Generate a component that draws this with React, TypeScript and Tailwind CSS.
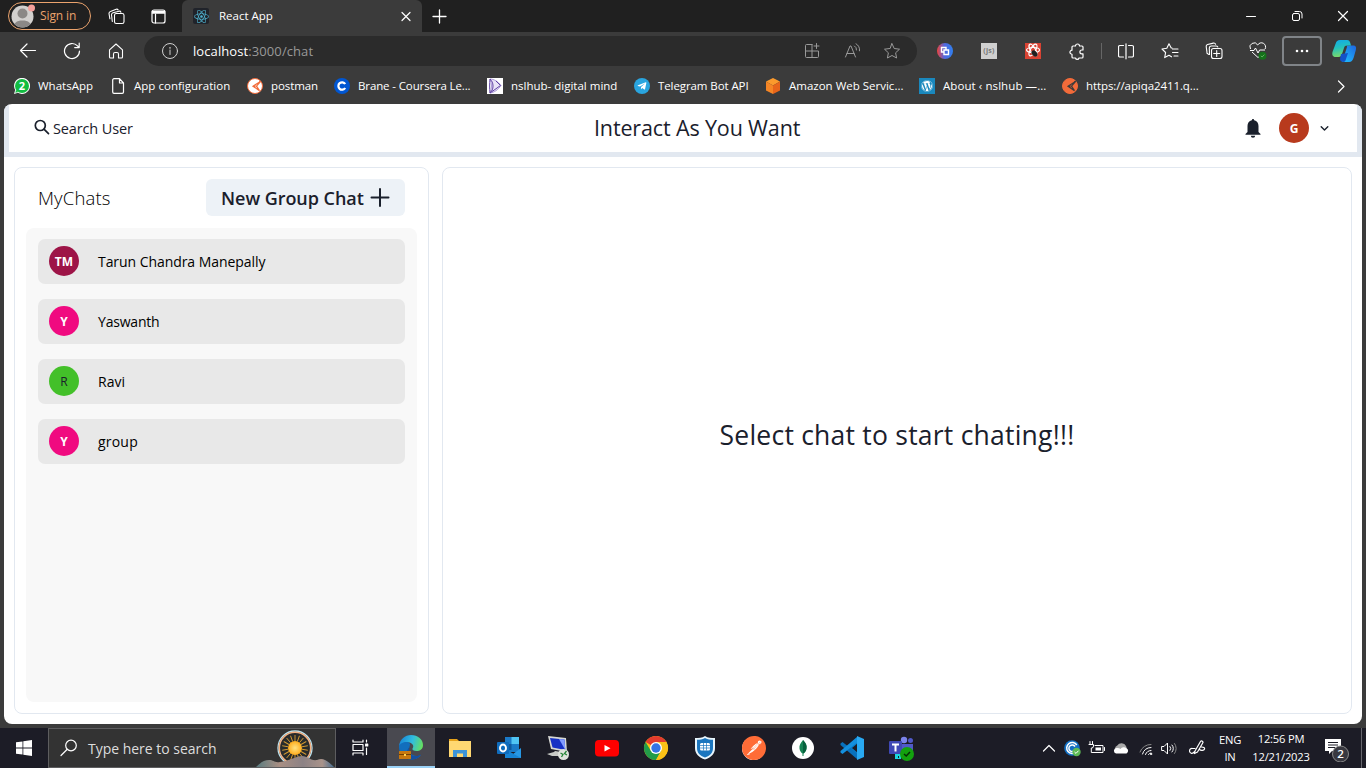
import React from 'react';
import { FaReact, FaWordpress, FaTelegramPlane } from 'react-icons/fa';
import { SiPostman } from 'react-icons/si';

type IconProps = {
  s?: number;
  h?: number;
  vb?: string;
  sw?: number;
  className?: string;
  children: React.ReactNode;
};

function Line({ s = 16, h, vb = '0 0 16 16', sw = 1, className = '', children }: IconProps) {
  return (
    <svg
      width={s}
      height={h ?? s}
      viewBox={vb}
      fill="none"
      stroke="currentColor"
      strokeWidth={sw}
      strokeLinecap="round"
      strokeLinejoin="round"
      className={'shrink-0 ' + className}
    >
      {children}
    </svg>
  );
}

/* ---------- Browser chrome ---------- */

function ProfileIcon() {
  return (
    <svg width="25" height="24" viewBox="0 0 25 24" className="shrink-0">
      <defs>
        <clipPath id="face">
          <circle cx="11.5" cy="12.5" r="11" />
        </clipPath>
      </defs>
      <circle cx="11.5" cy="12.5" r="11" fill="#d2d0ce" />
      <g clipPath="url(#face)" fill="#8b8886">
        <circle cx="11.5" cy="9.5" r="5" />
        <path d="M2.500 24c0-5 3-7.500 9-7.500s9 2.500 9 7.500z" />
      </g>
      <circle cx="20.500" cy="4" r="3.500" fill="#f5a09b" />
    </svg>
  );
}

function TabBar() {
  return (
    <div className="flex h-8 shrink-0 items-center bg-[#202020]">
      <div className="ml-2 flex h-7 w-[83px] items-center rounded-full border border-[#eba36d] pl-[2px]">
        <ProfileIcon />
        <span className="ml-1 text-[12px] leading-none tracking-[-0.1px] whitespace-nowrap text-[#eba36d]">Sign in</span>
      </div>
      <Line className="ml-[17px] text-white" s={17} h={17} vb="0 0 17 17" sw={1.100}>
        <rect x="6.500" y="5.500" width="9.500" height="10" rx="1.800" />
        <path d="M4.300 13.500 3.500 6.800a2.200 2.200 0 0 1 1.500-2L11 3.200a1.600 1.600 0 0 1 1.900 1" />
        <path d="M1.900 10.800 1 5.500a2 2 0 0 1 1.500-2L8.200 1.200a1.600 1.600 0 0 1 1.900.7" />
      </Line>
      <Line className="ml-[26px] text-white" s={15} h={15} vb="0 0 15 15" sw={1.200}>
        <rect x="1" y="1" width="13" height="13" rx="2" />
        <path d="M1.500 2.500h12M1.500 4h12" strokeWidth="1.500" />
        <path d="M4.500 5v9" />
      </Line>
      <div className="ml-4 flex h-8 w-[240px] items-center rounded-t-md bg-[#3b3b3b] pl-[11px]">
        <div className="flex size-4 items-center justify-center rounded-[2px] bg-[#20232a]">
          <FaReact size={15} color="#4fb3cf" />
        </div>
        <span className="ml-[10px] w-[178px] text-[11.500px] leading-none tracking-[0px] whitespace-nowrap text-white">React App</span>
        <Line className="ml-[3px] text-white" s={12} vb="0 0 12 12" sw={1.200}>
          <path d="m2 2.500 8 8M10 2.500l-8 8" />
        </Line>
      </div>
      <Line className="ml-[9px] text-white" s={17} vb="0 0 17 17" sw={1.300}>
        <path d="M8.500 2v13M2 8.500h13" />
      </Line>
      <div className="ml-auto flex items-center pr-[17px] text-white">
        <Line s={12} vb="0 0 12 12"><path d="M1.500 6.500h9" /></Line>
        <Line className="ml-[34px]" s={12} vb="0 0 12 12">
          <rect x="1.500" y="3.500" width="7" height="7" rx="1.500" />
          <path d="M4 1.500h4.500a2.500 2.500 0 0 1 2.500 2.500v4" />
        </Line>
        <Line className="ml-[34px]" s={12} vb="0 0 12 12" sw={1.200}><path d="m1.500 1.500 9 9M10.500 1.500l-9 9" /></Line>
      </div>
    </div>
  );
}

function Toolbar() {
  return (
    <div className="flex h-[38px] shrink-0 items-center text-white">
      <Line className="ml-[19px]" s={18} vb="0 0 18 18" sw={1.200}><path d="M16.500 8.500H1.500M8 2 1.500 8.500 8 15" /></Line>
      <Line className="ml-[26px]" s={18} vb="0 0 18 18" sw={1.200}>
        <path d="M16.500 9a7.500 7.500 0 1 1-2-5.100L16 5.500M16.200 1v4.600h-4.500" />
      </Line>
      <Line className="ml-[27px]" s={16} h={18} vb="0 0 16 18" sw={1.100}>
        <path d="M1.500 7.800 8 2l6.500 5.800v7.200a1 1 0 0 1-1 1H10.500v-4a1.500 1.500 0 0 0-1.500-1.500H7A1.500 1.500 0 0 0 5.500 12v4h-3a1 1 0 0 1-1-1z" />
      </Line>
      <div className="ml-5 flex h-[30px] w-[773px] items-center rounded-full bg-[#2b2b2b] pl-[17px]">
        <Line className="text-[#d0d0d0]" s={18} vb="0 0 18 18">
          <circle cx="9" cy="9" r="7.500" />
          <path d="M9 8v4.500" />
          <path d="M9 5.700v.2" strokeWidth="1.500" />
        </Line>
        <span className="ml-[14px] text-[13px] leading-none tracking-[0.090px] whitespace-nowrap text-white">
          localhost<span className="text-[#999]">:3000/chat</span>
        </span>
        <div className="ml-auto flex items-center pr-4 text-[#9a9a9a]">
          <Line s={16}>
            <path d="M8 1.500H2.500a1 1 0 0 0-1 1V13.500a1 1 0 0 0 1 1H13.500a1 1 0 0 0 1-1V8H1.500M8 1.500v13M12.500.500v5M10 3h5" />
          </Line>
          <Line className="ml-6" s={17} vb="0 0 17 17">
            <path d="M1.500 14 6 3h1l4.500 11M3 10.500h7M10.500 3a4 4 0 0 1 2 4M12 .800a7 7 0 0 1 3.500 7" />
          </Line>
          <Line className="ml-[22px]" s={18} vb="0 0 18 18">
            <path d="m9 1.700 2.200 4.800 5.300.7-3.900 3.600 1 5.200L9 13.500 4.400 16l1-5.200L1.500 7.200l5.300-.7z" />
          </Line>
        </div>
      </div>

      <svg className="ml-5 shrink-0" width="16" height="16" viewBox="0 0 16 16">
        <defs>
          <linearGradient id="ext" x1="0" x2="1" y1=".5" y2=".5">
            <stop offset="0" stopColor="#f2433a" /><stop offset=".45" stopColor="#5567dc" /><stop offset="1" stopColor="#2f80f0" />
          </linearGradient>
        </defs>
        <circle cx="8" cy="8" r="8" fill="url(#ext)" />
        <path d="M9 6.500V4.500H4.500V9h2M7 7v4.500h4.500V7H7z" fill="none" stroke="#fff" strokeWidth="1.400" />
      </svg>
      <div className="ml-7 flex size-4 items-center justify-center bg-[#cfcfcf] text-[7px] font-bold tracking-[0.300px] text-[#777]">(js)</div>
      <svg className="ml-7 shrink-0" width="16" height="16" viewBox="0 0 16 16">
        <rect width="16" height="16" fill="#d94333" />
        <g fill="none" stroke="#fff" strokeWidth="1.200"><ellipse cx="8" cy="7" rx="6.500" ry="2.500" /><ellipse cx="8" cy="7" rx="6.500" ry="2.500" transform="rotate(60 8 7)" /><ellipse cx="8" cy="7" rx="6.500" ry="2.500" transform="rotate(120 8 7)" /></g>
        <ellipse cx="9.500" cy="10.500" rx="2.500" ry="3.500" fill="#202020" transform="rotate(-40 9.500 10.500)" />
      </svg>
      <Line className="ml-[27px]" s={17} vb="0 0 17 17" sw={1.200}>
        <path d="M5 3h2.500a2 2 0 1 1 4 0H14a1 1 0 0 1 1 1v3h-1.200a1.900 1.900 0 1 0 0 3.800H15V14a1 1 0 0 1-1 1h-3a1.800 1.800 0 0 1-3.500 0H5a1 1 0 0 1-1-1v-2.700a2 2 0 1 1 0-4.100V4a1 1 0 0 1 1-1z" />
      </Line>
      <div className="mr-4 ml-[16px] h-4 w-px bg-[#666]" />
      <Line s={16} h={17} vb="0 0 16 17" sw={1.200}>
        <path d="M5.500 2.500H2a1.500 1.500 0 0 0-1.500 1.500v8.500A1.500 1.500 0 0 0 2 14h3.500M10.500 2.500H14A1.500 1.500 0 0 1 15.500 4v8.500A1.500 1.500 0 0 1 14 14h-3.500M8 .800v15" />
      </Line>
      <Line className="ml-[27px]" s={18} vb="0 0 18 18" sw={1.100}>
        <path d="M11.500 7h5.500M11.500 10.500h5.500M13 14h4M11 6h-.8L8 1.700 5.800 6.200 1 7l3.600 3.500-.9 5.100L8 13.300l2.500 1.500" />
      </Line>
      <Line className="ml-[26px]" s={18} vb="0 0 18 18" sw={1.100}>
        <rect x="6.500" y="6.500" width="10.500" height="10" rx="2" />
        <path d="M11.700 8.500v6M8.700 11.500h6M4.500 12.500l-1.400-.4a2 2 0 0 1-1.200-2.400L1.200 4.700a2 2 0 0 1 1.400-2.200l5.800-1.400a2 2 0 0 1 2.200 1.200M4.500 12.300 4.300 6a2 2 0 0 1 1.800-2h5a2 2 0 0 1 1.700 1" />
      </Line>
      <svg className="ml-[26px] shrink-0" width="18" height="18" viewBox="0 0 18 18" fill="none" stroke="#fff" strokeLinejoin="round">
        <path d="M1.500 7a4 4 0 0 1 7.200-4 4 4 0 0 1 7.400 4M3 10l6 5.500 1-.8M1 8.500h4L6.500 6 9 11l1.600-3H16" />
        <circle cx="13.500" cy="13.700" r="4" fill="#15711b" stroke="none" />
        <path d="m11.800 13.800 1.300 1.200 2.300-2.400" stroke="#5fae5f" />
      </svg>
      <div className="ml-[15px] flex h-[30px] w-10 shrink-0 items-center justify-center rounded-[4px] border-2 border-[#808488]">
        <svg width="14" height="4" viewBox="0 0 14 4" fill="#fff"><circle cx="2" cy="2" r="1.300" /><circle cx="7" cy="2" r="1.300" /><circle cx="12" cy="2" r="1.300" /></svg>
      </div>
      <svg className="ml-[9px] shrink-0" width="26" height="24" viewBox="0 0 26 24">
        <defs>
          <linearGradient id="cp1" x1="0" x2=".2" y1="0" y2="1"><stop offset="0" stopColor="#10a9ea" /><stop offset=".5" stopColor="#24c1bd" /><stop offset="1" stopColor="#78d96d" /></linearGradient>
          <linearGradient id="cp2" x1="0" x2="1" y1="1" y2="0"><stop offset="0" stopColor="#20c4ff" /><stop offset="1" stopColor="#1d64de" /></linearGradient>
        </defs>
        <path d="M13 6.500h8.500c4 0 4 2 3.200 5l-2 7c-1 3-2.500 4.500-4.500 4.500h-7l4.500-14c.8-2 .500-2.500-2.700-2.500z" fill="url(#cp2)" />
        <path d="M9 1h7c2 0 2.700 1 3.300 3l.7 2.500h-4c-2 0-2.600 1-3 2.500l-2 6c-.6 2-1.500 3-3.500 3H4.500C1.500 18 .9 15.500 1.500 13L4.500 5C5.500 2 6.500 1 9 1z" fill="url(#cp1)" />
        <path d="m10 15-1 5c0 2 1.500 3 3.500 3 1.500 0 2-1 2.500-3l2-6z" fill="#1353c8" />
      </svg>
    </div>
  );
}

function Bookmark({ icon, label, className }: { icon: React.ReactNode; label: string; className: string }) {
  return (
    <div className={'flex shrink-0 items-center ' + className}>
      <div className="flex size-4 shrink-0 items-center justify-center">{icon}</div>
      <span className="ml-2 text-[11.500px] leading-none whitespace-nowrap text-white">{label}</span>
    </div>
  );
}

function PostmanMark({ bg, fg }: { bg: string; fg: string }) {
  return (
    <svg width="16" height="16" viewBox="0 0 16 16">
      <circle cx="8" cy="8" r="7.500" fill={bg} stroke="#f26b3a" />
      <path d="M13.500 3.500 6 8.200l6.500 4.500M13.500 3.500 9.500 8.200l3 4.500" fill="none" stroke={fg} strokeWidth="1.200" />
      <path d="m6 8.200 2.500-1.500v3z" fill={fg} />
    </svg>
  );
}

function Bookmarks() {
  return (
    <div className="flex h-[34px] shrink-0 items-center pb-[2px] pl-[14px] text-white">
      <Bookmark
        className="w-[96px] tracking-[0px]"
        label="WhatsApp"
        icon={
          <svg width="16" height="16" viewBox="0 0 16 16">
            <path d="M0 16 1.200 12A8 8 0 1 1 4 14.800z" fill="#fff" />
            <circle cx="8" cy="8" r="7" fill="#12bd42" /><path d="m1.300 14.700.8-3 2.200 2.200z" fill="#12bd42" />
            <text x="8" y="12" textAnchor="middle" fontSize="11" fontWeight="700" fill="#fff">2</text>
          </svg>
        }
      />
      <Bookmark
        className="w-[137px] tracking-[0.020px]"
        label="App configuration"
        icon={<Line sw={1.200}><path d="M4 .700h5.500l4 4.300v9a1.300 1.300 0 0 1-1.300 1.300H4A1.300 1.300 0 0 1 2.700 14V2A1.300 1.300 0 0 1 4 .700zM9.500 1v4h4" /></Line>}
      />
      <Bookmark className="w-[87px] tracking-[-0.100px]" label="postman" icon={<PostmanMark bg="#fff" fg="#f26b3a" />} />
      <Bookmark
        className="w-[153px] tracking-[-0.120px]"
        label="Brane - Coursera Le..."
        icon={
          <svg width="16" height="16" viewBox="0 0 16 16">
            <circle cx="8" cy="8" r="8" fill="#0056d2" />
            <path d="M11.200 6a3.700 3.700 0 1 0 0 4" fill="none" stroke="#fff" strokeWidth="2.200" />
          </svg>
        }
      />
      <Bookmark
        className="w-[147px] tracking-[0px]"
        label="nslhub- digital mind"
        icon={
          <svg width="16" height="16" viewBox="0 0 16 16">
            <rect width="16" height="16" fill="#fff" />
            <path d="M3 1c4 0 8 2.500 11 6.500C11 12 7 14.500 3 15 5 10 5 6 3 1z" fill="#eae4f7" stroke="#9a84cf" strokeWidth=".8" />
            <path d="M3 1c-.5 5-.5 9 0 14 2-2 3-4 3-7S5 3 3 1zM3 15l10.500-7.500L9 3" fill="none" stroke="#5f42a3" strokeWidth="1" />
          </svg>
        }
      />
      <Bookmark
        className="w-[131px] tracking-[-0.090px]"
        label="Telegram Bot API"
        icon={<div className="flex size-4 items-center justify-center rounded-full bg-[#2aa5df]"><FaTelegramPlane size={10} /></div>}
      />
      <Bookmark
        className="w-[154px] tracking-[0px]"
        label="Amazon Web Servic..."
        icon={
          <svg width="16" height="16" viewBox="0 0 16 16">
            <path d="m8 0 7 3.500-7 4-7-4z" fill="#fb9a2c" /><path d="m1 3.500 7 4V16l-7-3.500z" fill="#f58525" /><path d="m15 3.500-7 4V16l7-3.500z" fill="#e8651a" />
          </svg>
        }
      />
      <Bookmark
        className="w-[143px] tracking-[0.080px]"
        label="About ‹ nslhub —..."
        icon={<div className="flex size-4 items-center justify-center bg-[#1a88bd]"><FaWordpress size={12} /></div>}
      />
      <Bookmark className="w-[150px] tracking-[-0.080px]" label="https://apiqa2411.q..." icon={<PostmanMark bg="#f26b3a" fg="#3b3b3b" />} />
      <Line className="mr-[18px] ml-auto text-white" s={14} vb="0 0 14 14" sw={1.200}><path d="m4.500 2 5.500 5.500L4.500 13" /></Line>
    </div>
  );
}

/* ---------- Chat application ---------- */

const chats = [
  { initials: 'TM', name: 'Tarun Chandra Manepally', color: 'bg-[#9d1447] font-bold text-white', tracking: 'tracking-[-0.060px]' },
  { initials: 'Y', name: 'Yaswanth', color: 'bg-[#f00a80] font-bold text-white', tracking: 'tracking-[-0.200px]' },
  { initials: 'R', name: 'Ravi', color: 'bg-[#43c029] font-normal text-[#1a202c]', tracking: 'tracking-[0px]' },
  { initials: 'Y', name: 'group', color: 'bg-[#f00a80] font-bold text-white', tracking: 'tracking-[0.200px]' },
];

function Avatar({ initials, color }: { initials: string; color: string }) {
  return (
    <div className={'flex size-[30px] shrink-0 items-center justify-center rounded-full pt-px text-[12px] leading-none ' + color}>
      {initials}
    </div>
  );
}

function ChatApp() {
  return (
    <div className="mx-1 flex h-[620px] shrink-0 flex-col overflow-hidden rounded-lg bg-white text-[#1a202c]">
      <header className="flex h-[53px] shrink-0 items-center border-x-[5px] border-b-[5px] border-[#e2e8f0] pr-[27px] pl-[25px]">
        <div className="flex w-[560px] items-center">
          <Line className="mb-[3px]" s={16} vb="0 0 16 16" sw={1.700}>
            <circle cx="6.300" cy="6.500" r="5" /><path d="m10.200 10.400 4.300 4.300" />
          </Line>
          <span className="mt-[2px] ml-[3px] text-[14.500px] leading-none font-medium tracking-[-0.130px] whitespace-nowrap">Search User</span>
        </div>
        <h1 className="text-[21.500px] leading-none font-normal tracking-[-0.140px] whitespace-nowrap">Interact As You Want</h1>
        <div className="flex flex-1 items-center justify-end">
          <svg width="16" height="19" viewBox="0 0 16 19" fill="#1a202c">
            <path d="M8 0a1.200 1.200 0 0 0-1.200 1.200C4 1.800 2.500 4 2.500 7v6L.500 15v.800h15V15l-2-2V7c0-3-1.500-5.200-4.300-5.800A1.200 1.200 0 0 0 8 0zM5.800 16.800a2.200 2 0 0 0 4.400 0z" />
          </svg>
          <div className="mr-[10px] ml-[18px]"><Avatar initials="G" color="bg-[#b83a1d] font-bold text-white" /></div>
          <Line s={11} vb="0 0 11 11" sw={1.400}><path d="m2.200 3.700 3.300 3.300 3.300-3.300" /></Line>
        </div>
      </header>
      <main className="flex min-h-0 flex-1 gap-[13px] p-[10px]">
        <section className="flex w-[415px] flex-col rounded-[8px] border border-[#e2e8f0] px-[11px] pt-[11px] pb-[11px]">
          <div className="flex h-[37px] shrink-0 items-center justify-between px-3">
            <h2 className="mt-[2px] text-[18.500px] leading-none font-light tracking-[0.150px] text-black">MyChats</h2>
            <button className="flex h-[37px] w-[199px] items-center rounded-[6px] bg-[#edf2f7] pl-[15px]">
              <span className="text-[18px] leading-none font-semibold tracking-[-0.040px] whitespace-nowrap">New Group Chat</span>
              <Line className="ml-[6px]" s={20} vb="0 0 20 20" sw={2}><path d="M10 1v17M1.500 9.500h17" /></Line>
            </button>
          </div>
          <div className="mt-3 flex flex-1 flex-col gap-[15px] rounded-[8px] bg-[#f8f8f8] px-3 pt-[11px]">
            {chats.map((chat) => (
              <div key={chat.name} className="flex h-[45px] items-center rounded-[7px] bg-[#e8e8e8] pl-[11px] text-black">
                <div className="pb-px"><Avatar initials={chat.initials} color={chat.color} /></div>
                <span className={'ml-[19px] text-[14px] leading-none ' + chat.tracking}>{chat.name}</span>
              </div>
            ))}
          </div>
        </section>
        <section className="flex flex-1 items-center justify-center rounded-[8px] border border-[#e2e8f0] pb-[10px]">
          <p className="text-[26.500px] leading-none font-normal tracking-[0.230px] whitespace-nowrap">Select chat to start chating!!!</p>
        </section>
      </main>
    </div>
  );
}

/* ---------- Windows taskbar ---------- */

function SearchArt() {
  const rays = Array.from({ length: 18 }, (_, i) => i * 20);
  return (
    <svg width="80" height="38" viewBox="0 0 80 38" className="absolute right-0 bottom-0">
      <defs>
        <linearGradient id="hill" x1="0" x2="1"><stop offset="0" stopColor="#597c80" /><stop offset=".3" stopColor="#a98f83" /><stop offset=".6" stopColor="#8c8285" /><stop offset=".85" stopColor="#a9938a" /><stop offset="1" stopColor="#476e91" /></linearGradient>
        <radialGradient id="sun"><stop offset="0" stopColor="#ffe282" /><stop offset="1" stopColor="#ffad1c" /></radialGradient>
      </defs>
      <circle cx="40" cy="19" r="17" fill="#292b2b" stroke="#b9e3f0" strokeWidth="1.300" />
      <circle cx="40" cy="19" r="15.700" fill="none" stroke="#f3b183" strokeWidth="1.500" />
      {rays.map((r) => <path key={r} d="M40 12V6" stroke="#d59b32" strokeWidth=".9" transform={`rotate(${r} 40 19)`} />)}
      <circle cx="40" cy="19" r="7" fill="url(#sun)" />
      <path d="M1 38c4-4 8-7 13-7 5 0 5 3 11 2 8-1 17-6 22-6 6 0 8 5 15 4 5-2 9-1 17 7z" fill="url(#hill)" />
    </svg>
  );
}

function TaskIcon({ children }: { children: React.ReactNode }) {
  return (
    <div className="flex h-10 w-[49px] shrink-0 items-center justify-center">
      <svg width="26" height="26" viewBox="0 0 26 26">{children}</svg>
    </div>
  );
}

function Taskbar() {
  return (
    <footer className="mt-1 flex h-10 shrink-0 items-center bg-[#1c1c26] text-white">
      <div className="flex w-12 shrink-0 justify-center">
        <svg width="16" height="16" viewBox="0 0 16 16" fill="#fff"><path d="m0 2.300 6.500-.9v6.200H0zM7.300 1.200 16 0v7.600H7.300zM0 8.400h6.500v6.200L0 13.700zM7.300 8.400H16V16l-8.700-1.200z" /></svg>
      </div>
      <div className="relative flex h-10 w-[288px] shrink-0 items-center border border-[#5d5d5f] bg-[#333]">
        <Line className="ml-[11px]" s={18} vb="0 0 18 18" sw={1.200}><circle cx="11" cy="6.500" r="5.300" /><path d="M7 10.500 1 16.500" /></Line>
        <span className="mt-[2px] ml-[10px] text-[14px] leading-none tracking-[-0.020px] whitespace-nowrap text-[#ddd]">Type here to search</span>
        <SearchArt />
      </div>
      <div className="flex h-10 w-[51px] shrink-0 items-center justify-center pr-1">
        <Line s={18} vb="0 0 18 18" sw={1.200}>
          <path d="M2 1v2h10V1M2 5.500h10v6H2zM2 16v-2h10v2M15.500 1v2M15.500 9v6.500" />
          <rect x="14.700" y="5" width="2" height="2" fill="#fff" />
        </Line>
      </div>
      <div className="flex h-10 w-12 shrink-0 items-center justify-center border-b-2 border-[#9ad2f7] bg-[#494950]">
        <svg width="26" height="26" viewBox="0 0 26 26">
          <defs>
            <linearGradient id="edge" x1="0" x2="1" y1=".3" y2=".5"><stop offset="0" stopColor="#1684d8" /><stop offset=".55" stopColor="#31bddf" /><stop offset="1" stopColor="#65df62" /></linearGradient>
          </defs>
          <path d="M1 13c0-5 5-7 9-5 3 1.500 2 3 1.500 5-2 5 2.500 9 7 9 2 0 3.500-.500 4.500-1-2 3-6 4.500-10 4.500C6 25.500 1 20 1 13z" fill="#126ebd" />
          <path d="M1 12C2 5 7 1 13 1c7 0 12 4.500 12 10 0 4-3 6-6.500 6-3 0-4.500-1-4-2.500 1.500-1.500 1-5-3-6C7 7 2 9 1 12z" fill="url(#edge)" />
          <path d="M11.500 13c-2 5 1 8.500 5.500 9 2.500.2 4.500-.500 6-1.500-2 3.500-6 5.500-10 5-5-2-5.500-9-1.500-12.500z" fill="#1650a0" />
          <rect x="1" y="17" width="12" height="8" rx=".5" fill="#c8780f" /><path d="M1 20.500h12" stroke="#744000" /><rect x="6" y="20" width="2" height="2" fill="#ffd34c" />
        </svg>
      </div>
      <TaskIcon>
        <path d="M2 4h8l2 2v3H2z" fill="#e6a21a" /><path d="M2 6h22v16H2z" fill="#ffd872" /><path d="M6 22v-7h14v7h-4v-3.500h-6V22z" fill="#3d94d9" />
      </TaskIcon>
      <TaskIcon>
        <path d="M9 2h14v15H9z" fill="#1a7ac8" /><path d="M15.500 2H23v7h-7.500z" fill="#50c5f4" /><path d="M9 9h6.500v6H9z" fill="#0f599e" /><path d="M9 15l8 4 8-6v10H9z" fill="#2798e5" /><path d="m9 14 16 9H9z" fill="#1683d4" /><rect x="1" y="7" width="12" height="12" rx="1" fill="#0f6cbd" /><ellipse cx="7" cy="13" rx="3" ry="3.500" fill="none" stroke="#fff" strokeWidth="1.900" />
      </TaskIcon>
      <TaskIcon>
        <path d="m3 1 18 2 1 14-16-3z" fill="#d7d8d4" /><path d="m5 3 14.500 1.500.8 10.500L7.500 12.500z" fill="#1731c4" /><path d="m14 4 5.500.500.8 10.500z" fill="#829cff" /><path d="m10 16 6 1-1 4H7l-5-2 7-2z" fill="#c9cbc7" /><circle cx="18.500" cy="19.500" r="5.500" fill="#dfe3dc" /><path d="m15.500 18 2.500 1.500-1.500 2.500M21.500 16l-2 2.500 2.500 1.500" fill="none" stroke="#278538" strokeWidth="1.300" />
      </TaskIcon>
      <TaskIcon><rect x="1" y="5" width="24" height="16.500" rx="4" fill="#f00" /><path d="m10.500 10 6 3.300-6 3.300z" fill="#fff" /></TaskIcon>
      <TaskIcon>
        <circle cx="13" cy="13" r="12" fill="#fbc116" /><path d="M13 13 2.600 7A12 12 0 0 1 23.400 7z" fill="#e33b2e" /><path d="M2.600 7A12 12 0 0 0 13 25l5-9-5 1-5-1z" fill="#229c49" /><path d="M13 7h10.400A12 12 0 0 1 13 25l5.200-9z" fill="#fbc116" /><circle cx="13" cy="13" r="6" fill="#fff" /><circle cx="13" cy="13" r="4.700" fill="#3474e6" />
      </TaskIcon>
      <TaskIcon>
        <path d="M13 1c3 2 6 2 10 2v10c0 6-4 9.500-10 11.500C7 22.500 3 19 3 13V3c4 0 7 0 10-2z" fill="#e9f6fd" /><path d="M13 3c3 1.500 5 1.700 8 1.800V13c0 5-3 7.500-8 9.500C8 20.500 5 18 5 13V4.800c3-.1 5-.3 8-1.800z" fill="#1b76bf" />
        <rect x="8" y="8" width="10" height="7.500" rx="1.500" fill="#fff" /><path d="M8 10.500h10M8 13h10M11.500 8v7.500M14.500 8v7.500" stroke="#1b76bf" strokeWidth=".7" />
      </TaskIcon>
      <div className="flex h-10 w-[49px] shrink-0 items-center justify-center"><div className="flex size-[23px] items-center justify-center rounded-full bg-white"><SiPostman size={24} className="shrink-0" color="#ff6c37" /></div></div>
      <TaskIcon><circle cx="13" cy="13" r="11" fill="#fff" /><path d="M13 5c3 3 4 5.500 3.500 8.500-.3 2.500-1.500 4-3 5V21h-1v-2.500c-1.500-1-2.700-2.500-3-5C9 10.500 10.500 8 13 5z" fill="#168455" /><path d="M13 5c3 3 4 5.500 3.500 8.500-.3 2.500-1.500 4-3.500 5z" fill="#07613d" /></TaskIcon>
      <TaskIcon><path d="M19 1.500 7 13l12 11V18l-6-5 6-5z" fill="#087bc8" /><path d="M1.500 8.500 3.500 7 20 20l-2 4L1.500 10z" fill="#0871bd" /><path d="M1.500 17.500 3.500 19 20 6l-2-4L1.500 16z" fill="#1490df" /><path d="m18 1 7 3v18l-7 3z" fill="#29a9f2" /></TaskIcon>
      <TaskIcon>
        <circle cx="16" cy="5" r="3.200" fill="#7b83eb" /><circle cx="22.500" cy="5.500" r="2.500" fill="#5059c9" /><path d="M11 9h14v8a6 6 0 0 1-12 2z" fill="#5059c9" /><rect x="1" y="6" width="13" height="13" rx="1" fill="#3f48b5" /><path d="M4 9.500h7M7.500 9.500v7" stroke="#fff" strokeWidth="2" /><path d="M7 19h6v5H7z" fill="#1bd7df" /><path d="M10.500 21v2" stroke="#1c1c26" /><circle cx="19" cy="19" r="7" fill="#13a10e" /><path d="m16 19 2.200 2 3.800-4" fill="none" stroke="#052c05" strokeWidth="1.500" />
      </TaskIcon>

      <div className="ml-auto flex h-10 shrink-0 items-center">
        <Line s={14} h={14} vb="0 0 14 14" sw={1.200}><path d="M1.500 10 7 4.500l5.500 5.500" /></Line>
        <svg className="ml-2" width="17" height="17" viewBox="0 0 17 17"><circle cx="8" cy="8" r="7.800" fill="#126fc3" /><path d="M12.800 5A5.500 5.500 0 1 0 12 12M11 6.500a3.300 3.300 0 1 0 0 3.500" fill="none" stroke="#fff" strokeWidth="1.500" /><circle cx="12.500" cy="12" r="4.200" fill="#5eba55" /><path d="m10.500 12 1.500 1.400 2.500-2.700" fill="none" stroke="#fff" /></svg>
        <Line className="ml-[7px]" s={17} h={16} vb="0 0 17 16">
          <path d="M2 1.500v3M4.500 1.500v3M1 4.500h4.500v1.500a2 2 0 0 1-2.200 2V12.500H6M7 5.500h8v7H5.500M16.500 7.500v3" /><path d="M7.500 7.500h5.500v3H7.500z" fill="#fff" stroke="none" />
        </Line>
        <svg className="ml-2" width="17" height="12" viewBox="0 0 17 12"><path d="M4 10a3.500 3.500 0 0 1 .3-6.500A5 5 0 0 1 13 4a4 4 0 0 1-2 6z" fill="#aaa" /><path d="M3 11.500a2.800 2.800 0 0 1 .5-5.500c1.500-.3 3 0 4 1a4 4 0 0 1 6-.8 3 3 0 0 1 0 5.300z" fill="#fff" /></svg>
        <Line className="ml-[9px]" s={15} vb="0 0 15 15"><path d="M1 11A11 11 0 0 1 12 3.500" stroke="#888" /><path d="M3.500 13a9 9 0 0 1 8.500-6.500M6.500 13.500A6 6 0 0 1 12 9.500M9.500 13.500a3 3 0 0 1 2.500-1.500" /><circle cx="12" cy="13" r=".7" /></Line>
        <Line className="ml-[7px]" s={17} h={15} vb="0 0 17 15"><path d="M1 5.500h2L6.500 2v11L3 9.500H1zM9 5.500a3 3 0 0 1 0 4M11 4a5 5 0 0 1 0 7" /><path d="M13.500 2.500a8 8 0 0 1 0 10" stroke="#888" /></Line>
        <Line className="ml-[11px]" s={17} h={16} vb="0 0 17 16" sw={1.200}><path d="M6 11 11.500 1.500a1.300 1.300 0 0 1 2.200 1.500L8.500 12 5.500 13.500zM6 8.500H3.500a2.300 2.300 0 0 0-1 4.800c2 .3 2.500-1 3.500-2.300M10.500 9.500c1.500 1.500 4.500 1 5-.5s-1-2-3-2" /></Line>
        <div className="ml-[10px] flex w-7 flex-col items-center gap-[5px] text-[11.200px] leading-[12px] tracking-[-0.200px]"><span>ENG</span><span>IN</span></div>
        <div className="ml-[5px] flex w-[64px] flex-col items-center gap-[6px] text-[11.200px] leading-[12px] tracking-[-0.200px] whitespace-nowrap"><span>12:56 PM</span><span>12/21/2023</span></div>
        <svg className="ml-[12px]" width="28" height="28" viewBox="0 0 28 28"><path d="M0 5h16v12H7l-3 3v-3H0z" fill="#fff" /><path d="M3 8.500h10M3 11h10M3 13.500h7" stroke="#1c1c26" /><circle cx="15.500" cy="20" r="8" fill="#383840" stroke="#888" /><text x="15.500" y="24" textAnchor="middle" fontSize="11.500" fontWeight="600" fill="#fff">2</text></svg>
        <div className="mr-1 ml-[8px] h-10 w-px bg-[#66666d]" />
      </div>
    </footer>
  );
}

export default function App() {
  return (
    <div className="flex h-[768px] w-[1366px] flex-col overflow-hidden bg-[#3b3b3b] font-['Open_Sans','Noto_Sans',sans-serif]">
      <TabBar />
      <Toolbar />
      <Bookmarks />
      <ChatApp />
      <Taskbar />
    </div>
  );
}
